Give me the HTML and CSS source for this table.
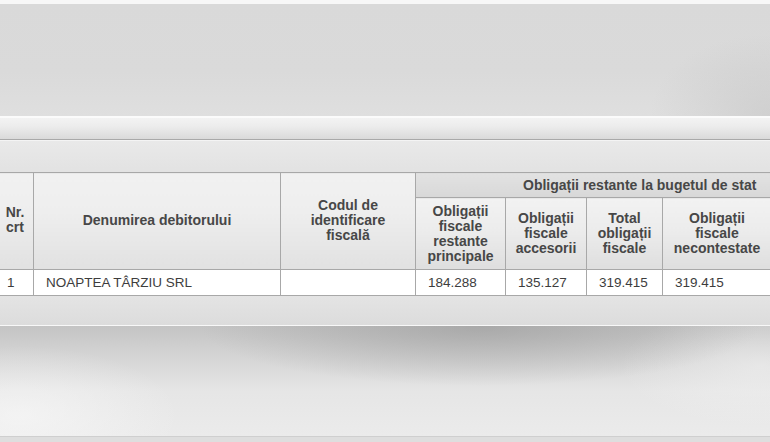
FILE: index.html
```html
<!DOCTYPE html>
<html lang="ro">
<head>
<meta charset="utf-8">
<title>Obligații restante</title>
<link rel="stylesheet" href="styles.css">
</head>
<body>
<div class="page">
  <div class="top-strip"></div>
  <div class="backdrop"></div>
  <div class="toolbar"></div>
  <div class="panel">
    <table class="debts">
      <colgroup>
        <col class="c-nr">
        <col class="c-name">
        <col class="c-cif">
        <col class="c-princ">
        <col class="c-acc">
        <col class="c-total">
        <col class="c-necont">
        <col class="c-extra">
      </colgroup>
      <thead>
        <tr class="group-row">
          <th rowspan="2" class="h-main">Nr.<br>crt</th>
          <th rowspan="2" class="h-main">Denumirea debitorului</th>
          <th rowspan="2" class="h-main">Codul de<br>identificare<br>fiscală</th>
          <th colspan="5" class="h-group">Obligații restante la bugetul de stat</th>
        </tr>
        <tr class="sub-row">
          <th class="h-sub">Obligații<br>fiscale<br>restante<br>principale</th>
          <th class="h-sub">Obligații<br>fiscale<br>accesorii</th>
          <th class="h-sub">Total<br>obligații<br>fiscale</th>
          <th class="h-sub">Obligații<br>fiscale<br>necontestate</th>
          <th class="h-sub"></th>
        </tr>
      </thead>
      <tbody>
        <tr class="data-row">
          <td>1</td>
          <td>NOAPTEA TÂRZIU SRL</td>
          <td></td>
          <td>184.288</td>
          <td>135.127</td>
          <td>319.415</td>
          <td>319.415</td>
          <td></td>
        </tr>
      </tbody>
    </table>
  </div>
  <div class="panel-edge"></div>
  <div class="shadow"></div>
  <div class="bottom-line"></div>
  <div class="bottom"></div>
</div>
</body>
</html>
```
FILE: styles.css
```css
html, body {
  margin: 0;
  padding: 0;
  width: 770px;
  height: 442px;
  overflow: hidden;
  background: #e2e2e2;
}

.page {
  display: flex;
  flex-direction: column;
  width: 770px;
  height: 442px;
  overflow: hidden;
  font-family: "Liberation Sans", Arial, sans-serif;
}

.top-strip {
  height: 4px;
  flex: none;
  background: #f7f7f7;
}

.backdrop {
  height: 112px;
  flex: none;
  background:
    radial-gradient(ellipse 120px 80px at 770px 110px, rgba(190,190,190,0.45), rgba(190,190,190,0) 100%),
    linear-gradient(#d9d9d9, #dadada 60%, #dfdfdf);
}

.toolbar {
  height: 21px;
  flex: none;
  border-top: 2px solid #fbfbfb;
  border-bottom: 1px solid #a9a9a9;
  box-shadow: 0 1px 0 #f4f4f4;
  background: linear-gradient(#f3f3f3, #ececec 40%, #dadada);
}

.panel {
  flex: none;
  height: 184px;
  box-sizing: border-box;
  padding-top: 31px;
  margin-top: 1px;
  background: linear-gradient(#e9e9e9, #e3e3e3 15%, #e6e6e6 80%, #dcdcdc);
  overflow: hidden;
}

.debts {
  table-layout: fixed;
  border-collapse: collapse;
  margin-left: -4px;
  width: 883px;
  color: #444444;
  font-size: 14px;
}

.c-nr { width: 37px; }
.c-name { width: 247px; }
.c-cif { width: 135px; }
.c-princ { width: 90px; }
.c-acc { width: 81px; }
.c-total { width: 76px; }
.c-necont { width: 109px; }
.c-extra { width: 108px; }

.debts th,
.debts td {
  border: 1px solid #a8a8a8;
  padding: 0;
}

.debts th {
  font-weight: bold;
  text-align: center;
  vertical-align: middle;
  line-height: 15px;
  color: #474747;
}

.group-row { height: 25px; }
.sub-row { height: 72px; }
.data-row { height: 26px; }

.debts .h-main {
  background: linear-gradient(#f1f1f1, #eeeeee 40%, #e1e1e1);
  padding-bottom: 2px;
}

.debts .h-group {
  background: linear-gradient(#e2e2e2, #d8d8d8);
  text-align: left;
  padding-left: 107px;
}

.debts .h-sub {
  background: linear-gradient(#f2f2f2, #ececec 45%, #dedede);
}

.data-row td {
  background: #ffffff;
  padding-left: 12px;
  line-height: 15px;
  font-size: 13.5px;
  color: #3d3d3d;
  white-space: nowrap;
}

.data-row td:first-child {
  padding-left: 10px;
}

.panel-edge {
  flex: none;
  height: 1px;
  background: #f8f8f8;
}

.shadow {
  flex: none;
  height: 110px;
  background:
    radial-gradient(ellipse 280px 60px at 480px 0px, rgba(150,150,150,0.6), rgba(150,150,150,0) 100%),
    radial-gradient(ellipse 160px 70px at 20px 90px, rgba(250,250,250,0.6), rgba(250,250,250,0) 100%),
    radial-gradient(ellipse 140px 60px at 760px 40px, rgba(245,245,245,0.5), rgba(245,245,245,0) 100%),
    linear-gradient(#c4c4c4, #d6d6d6 30%, #e6e6e6 60%, #ebebeb);
}

.bottom-line {
  flex: none;
  height: 1px;
  background: #cfcfcf;
}

.bottom {
  flex: 1;
  background: #dedede;
}
```
